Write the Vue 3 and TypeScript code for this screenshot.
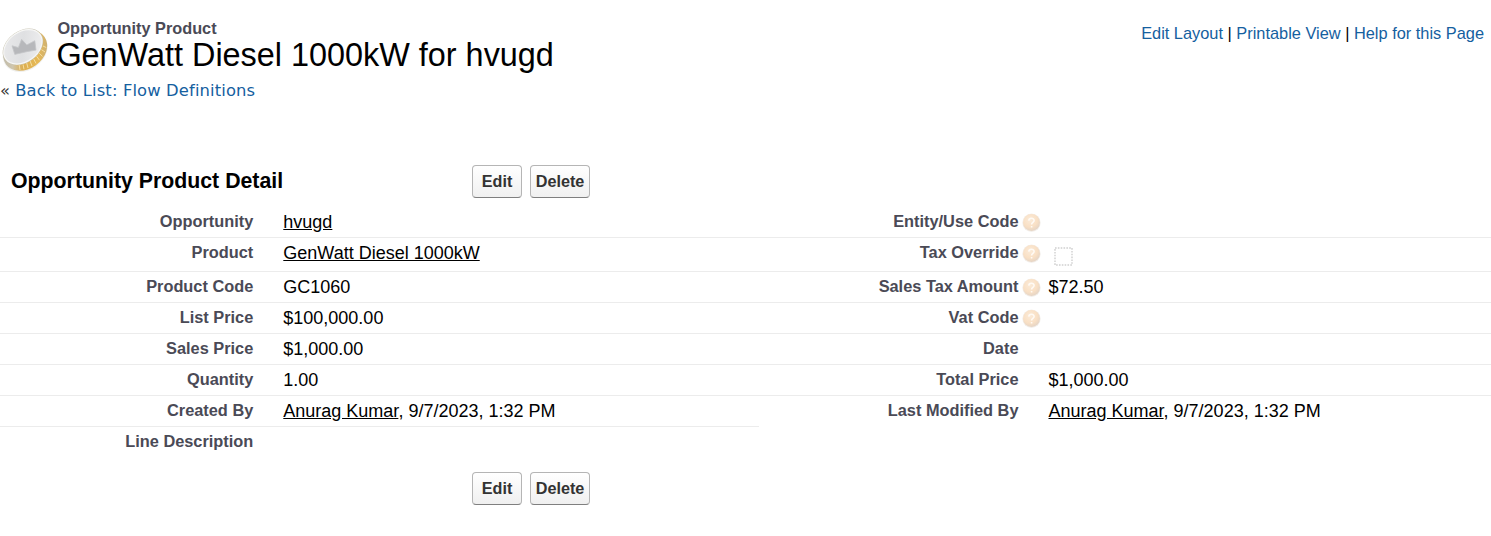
<script setup lang="ts">
interface Field {
  label: string
  value?: string
  link?: string
  help?: boolean
  checkbox?: boolean
}

const actions: string[] = ['Edit', 'Delete']

const rows: [Field, Field | null][] = [
  [{ label: 'Opportunity', link: 'hvugd' }, { label: 'Entity/Use Code', help: true }],
  [{ label: 'Product', link: 'GenWatt Diesel 1000kW' }, { label: 'Tax Override', help: true, checkbox: true }],
  [{ label: 'Product Code', value: 'GC1060' }, { label: 'Sales Tax Amount', help: true, value: '$72.50' }],
  [{ label: 'List Price', value: '$100,000.00' }, { label: 'Vat Code', help: true }],
  [{ label: 'Sales Price', value: '$1,000.00' }, { label: 'Date' }],
  [{ label: 'Quantity', value: '1.00' }, { label: 'Total Price', value: '$1,000.00' }],
  [
    { label: 'Created By', link: 'Anurag Kumar', value: ', 9/7/2023, 1:32 PM' },
    { label: 'Last Modified By', link: 'Anurag Kumar', value: ', 9/7/2023, 1:32 PM' },
  ],
  [{ label: 'Line Description' }, null],
]
</script>

<template>
  <div class="page">
    <header class="header">
      <svg class="coin" width="50" height="50" viewBox="0 0 50 50">
        <defs>
          <linearGradient id="edge" x1="0" y1="0" x2="1" y2="0.6">
            <stop offset="0" stop-color="#b5b2a6" />
            <stop offset="0.35" stop-color="#cfc6ae" />
            <stop offset="0.55" stop-color="#dcae50" />
            <stop offset="0.85" stop-color="#e6b957" />
            <stop offset="1" stop-color="#d0b272" />
          </linearGradient>
          <linearGradient id="face" x1="0" y1="0.2" x2="1" y2="0.8">
            <stop offset="0" stop-color="#e9e9ea" />
            <stop offset="0.5" stop-color="#dfe0e2" />
            <stop offset="1" stop-color="#efeff0" />
          </linearGradient>
        </defs>
        <ellipse cx="25.2" cy="27.4" rx="24.2" ry="18.6" transform="rotate(-36 25.2 27.4)" fill="#f0f0ee" />
        <ellipse cx="25.2" cy="26.6" rx="23.7" ry="18.2" transform="rotate(-36 25.2 26.6)" fill="url(#edge)" />
        <path d="M20 46l-.8-5M24 45.3l-1-5M28 44l-1.3-5M32 42l-1.9-5M36 39.4l-2.4-4.6M39.5 36.2l-3-4M42.5 32.4l-3.3-3.2M45 28l-3.6-2.4M46.4 23.6l-3.4-1.6" stroke="#f6dea1" stroke-width="1" />
        <ellipse cx="22.9" cy="22.8" rx="22.2" ry="15.9" transform="rotate(-36 22.9 22.8)" fill="#c9c5b4" />
        <ellipse cx="22.9" cy="22.8" rx="21" ry="14.9" transform="rotate(-36 22.9 22.8)" fill="url(#face)" stroke="#f7f7f6" stroke-width="1.2" />
        <path d="M14.8 30.4L12 21.8l6.4 1.7 3.2-8.2 5.2 5.6 8-4.2 1.2 9.4-9.4 1.6z" fill="#b7b8bb" stroke="#c5c6c9" stroke-width="0.8" stroke-linejoin="round" />
      </svg>
      <div class="titles">
        <h2 class="type">Opportunity Product</h2>
        <h1 class="name">GenWatt Diesel 1000kW for hvugd</h1>
      </div>
      <nav class="links"><a>Edit Layout</a> | <a>Printable View</a> | <a>Help for this Page</a></nav>
    </header>
    <div class="back">« <a>Back to List: Flow Definitions</a></div>

    <section class="detail">
      <div class="bar">
        <h3 class="heading">Opportunity Product Detail</h3>
        <div class="buttons">
          <button v-for="a in actions" :key="a" class="btn" type="button">{{ a }}</button>
        </div>
      </div>

      <div class="fields">
        <div v-for="(row, i) in rows" :key="i" class="row" :class="{ tall: i === 1, half: i === 6, last: i === 7 }">
          <template v-for="(f, j) in row" :key="j">
            <div v-if="f" class="cell" :class="{ right: j === 1 }">
              <div class="label">{{ f.label }}</div>
              <div class="help">
                <svg v-if="f.help" width="19" height="19" viewBox="0 0 19 19">
                  <defs>
                    <radialGradient id="orb" cx="0.42" cy="0.35" r="0.65">
                      <stop offset="0" stop-color="#fbebd9" />
                      <stop offset="0.65" stop-color="#f9e0c5" />
                      <stop offset="1" stop-color="#e6d5c5" />
                    </radialGradient>
                  </defs>
                  <circle cx="9.5" cy="9.7" r="9.2" fill="#f3efeb" />
                  <circle cx="9.5" cy="9.4" r="8.5" fill="url(#orb)" />
                  <path d="M6.8 7.6c.1-3.1 5.4-3.1 5.3 0 0 1.9-2.5 1.9-2.5 3.9M9.6 13v1.4" fill="none" stroke="#fffaf4" stroke-width="1.6" />
                </svg>
              </div>
              <div class="value">
                <a v-if="f.link" class="ref">{{ f.link }}</a><span v-if="f.value">{{ f.value }}</span>
                <svg v-if="f.checkbox" class="check" width="19" height="19" viewBox="0 0 19 19">
                  <rect x="1" y="1" width="17" height="17" fill="#fff" stroke="#cfcfcf" stroke-width="1.4" stroke-dasharray="1.6 1.24" />
                </svg>
              </div>
            </div>
          </template>
        </div>
      </div>

      <div class="bar bottom">
        <div class="buttons">
          <button v-for="a in actions" :key="a" class="btn" type="button">{{ a }}</button>
        </div>
      </div>
    </section>
  </div>
</template>

<style>
body {
  background: #fff;
}
</style>

<style scoped>
.page {
  width: 1491px;
  height: 536px;
  overflow: hidden;
  font-family: Arial, "Liberation Sans", sans-serif;
  font-size: 18px;
  color: #000;
}
.header {
  display: flex;
  height: 80px;
}
.coin {
  flex: none;
  margin-top: 24px;
}
.titles {
  flex: 1;
  padding: 19px 0 0 7.4px;
}
.type,
.name,
.heading {
  margin: 0;
}
.type {
  font-size: 16.3px;
  line-height: 19px;
  color: #4a4a56;
}
.name {
  font-size: 32.4px;
  line-height: 36px;
  margin-top: -1px;
  margin-left: -1px;
  font-weight: 400;
}
.links {
  padding: 24px 7px 0 0;
  font-size: 16.38px;
  line-height: 19px;
}
a {
  color: #15609f;
}
.back {
  height: 20px;
  padding-top: 1px;
  line-height: 20px;
  font-family: Verdana, "DejaVu Sans", sans-serif;
  font-size: 16.38px;
  color: #333;
  white-space: pre;
}
.back a {
  letter-spacing: 0.13px;
}
.detail {
  padding-top: 64px;
}
.bar {
  display: flex;
  height: 42px;
}
.heading {
  width: 461px;
  padding-left: 11px;
  font-size: 21.3px;
  line-height: 32px;
}
.buttons {
  display: flex;
  gap: 8px;
}
.bottom {
  padding-left: 472px;
  margin-top: 14px;
}
.btn {
  height: 33px;
  padding: 0 0 1px;
  width: 50px;
  border: 1px solid #b5b5b5;
  border-bottom-color: #7f7f7f;
  border-radius: 4px;
  background: linear-gradient(#fff, #f0f0f0);
  font: bold 16.2px Arial, "Liberation Sans", sans-serif;
  color: #333;
}
.btn + .btn {
  width: 60px;
}
.row {
  display: flex;
  height: 30px;
  border-bottom: 1px solid #ececec;
}
.tall {
  height: 33px;
}
.half {
  border-image: linear-gradient(to right, #ececec 759px, transparent 759px) 1;
}
.last {
  border-bottom-color: transparent;
}
.cell {
  display: flex;
  flex: none;
  width: 759px;
}
.right {
  width: 732px;
}
.label {
  width: 253.3px;
  padding-top: 5px;
  text-align: right;
  font-size: 16.35px;
  line-height: 19px;
  font-weight: 700;
  color: #4a4a56;
}
.right .label {
  width: 259.5px;
}
.help {
  width: 30px;
  padding: 6px 0 0 3.5px;
  box-sizing: border-box;
}
.help svg {
  display: block;
}
.value {
  padding-top: 5px;
  line-height: 20px;
}
.ref {
  color: #000;
  text-decoration: underline;
}
.check {
  display: block;
  margin: 4px 0 0 5.2px;
}
</style>
